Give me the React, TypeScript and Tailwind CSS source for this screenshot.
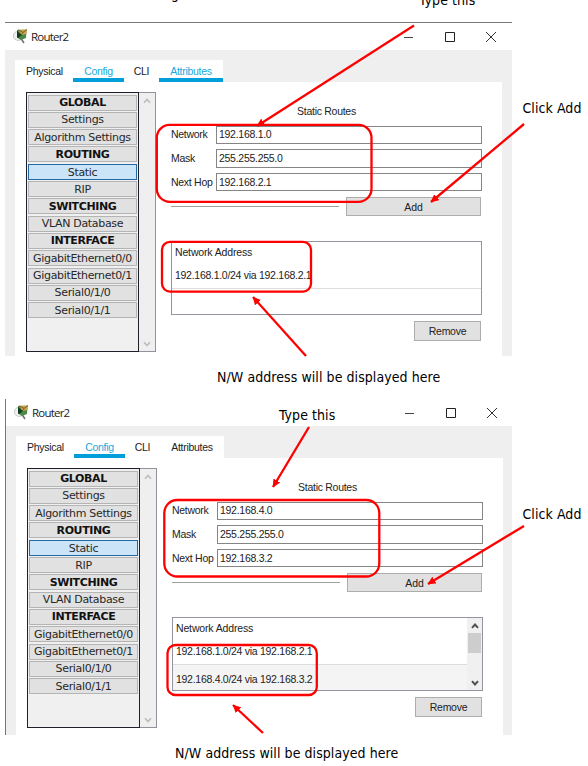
import React from 'react';

const items = ['GLOBAL', 'Settings', 'Algorithm Settings', 'ROUTING', 'Static', 'RIP', 'SWITCHING', 'VLAN Database', 'INTERFACE', 'GigabitEthernet0/0', 'GigabitEthernet0/1', 'Serial0/1/0', 'Serial0/1/1'];

const arial = "font-['Liberation_Sans',sans-serif]";
const note = "font-['DejaVu_Sans_Condensed','Noto_Sans',sans-serif] text-[14px] tracking-[0.07px] leading-[16px] whitespace-nowrap text-black";

function Chevron({ up, dark }: { up?: boolean; dark?: boolean }) {
  return (
    <svg width="8" height="6" viewBox="0 0 8 6" fill="none" stroke={dark ? '#505050' : '#bcbcbc'} strokeWidth={dark ? 2 : 1.6}>
      <path d={up ? 'M1 4.8 4 1.5 7 4.8' : 'M1 1.2 4 4.5 7 1.2'} />
    </svg>
  );
}

function RouterIcon() {
  return (
    <svg width="16" height="16" viewBox="0 0 16 16">
      <ellipse cx="6.2" cy="6.8" rx="4.8" ry="4.6" fill="#f0f1ee" stroke="#c6cac3" />
      <path d="M9 9.5 12 14" stroke="#707070" strokeWidth="1.5" />
      <path d="M5 1 14.5 .8 14 9 9 11 5 8.5Z" fill="#4b8748" />
      <path d="M6.5 .8 15 .5 14.5 5 9 6Z" fill="#c8a24e" />
      <path d="M6.5 .8 11 3.4 15 .5M9 6 11 3.4" stroke="#6b5218" fill="none" strokeWidth=".8" />
      <path d="M5 2 9.8 6 6.4 9 5 8.5Z" fill="#123f1e" />
    </svg>
  );
}

function Sidebar() {
  return (
    <aside className="flex h-[260px] w-[130px] shrink-0 border border-[#92929c] bg-[#efefef]">
      <div className="-ml-px -mt-px flex h-[260px] w-[113px] flex-col gap-[1.3px] border border-[#20202a] bg-[#f0f0f0] px-[1px] pt-[1.6px] font-['DejaVu_Sans',sans-serif] text-[11px]">
        {items.map((t) => {
          const head = /^[A-Z]{4,}$/.test(t);
          return (
            <div key={t} className={`flex h-4 shrink-0 items-center justify-center whitespace-nowrap border leading-none ${t === 'Static' ? 'border-[#2468a8] bg-[#cce4f7] pt-[2px]' : 'border-[#b4b4b4] bg-[#e1e1e1]'} ${head ? 'font-bold text-[#111] tracking-[-0.4px]' : 'text-[#282828] tracking-[-0.33px]'}`}>
              {t}
            </div>
          );
        })}
      </div>
      <div className="flex flex-1 flex-col items-center justify-between pb-1 pt-[5px]"><Chevron up /><Chevron /></div>
    </aside>
  );
}

function Field({ label, value }: { label: string; value: string }) {
  return (
    <div className="flex h-[18.5px] items-center">
      <span className="w-[45px] shrink-0 whitespace-nowrap pt-px">{label}</span>
      <div className="flex h-[18.5px] flex-1 items-center border border-[#858585] bg-white pl-[2px] pt-px">{value}</div>
    </div>
  );
}

function RouterWindow({ second }: { second?: boolean }) {
  const v = second ? ['192.168.4.0', '255.255.255.0', '192.168.3.2'] : ['192.168.1.0', '255.255.255.0', '192.168.2.1'];
  return (
    <section className={`ml-[5px] flex w-[507px] shrink-0 flex-col ${second ? 'h-[336px] border-l border-[#777]' : 'h-[334px] border-t border-[#777]'} ${arial} text-[10.5px] tracking-[-0.28px] text-[#222]`}>
      <header className="flex h-[27px] shrink-0 items-center bg-white pl-[7px]">
        <RouterIcon />
        <span className="ml-[3px] w-[39px] font-['Open_Sans',sans-serif] text-[11.5px] leading-none tracking-[-0.8px]">Router2</span>
        <div className={`ml-auto flex items-center gap-[31px] ${second ? 'pr-[15px]' : 'pr-4'}`}>
          <svg width="10" height="10"><path d="M0 5.5H9" stroke="#444" /></svg>
          <svg width="10" height="10"><path d="M.5 .5H9.5V9.5H.5Z" fill="none" stroke="#222" /></svg>
          <svg width="10" height="10"><path d="M0 0 10 10M10 0 0 10" stroke="#333" /></svg>
        </div>
      </header>
      <div className={`flex min-h-0 flex-1 flex-col bg-[#efefef] pl-[10px] pt-[10px] ${second ? 'pr-[9px]' : 'pr-[10px]'}`}>
        <nav className="flex h-[22px] w-[208px] shrink-0 bg-white">
          <div className="flex w-[58px] items-center pl-[11px] pt-px">Physical</div>
          <div className="flex w-[51px] items-center justify-center border-b-4 border-[#009fda] pt-[5px] text-[#20a8dc]">Config</div>
          <div className="flex w-[35px] items-center justify-center pt-px">CLI</div>
          <div className={`flex flex-1 items-center justify-center ${second ? 'pt-px' : 'border-b-4 border-[#009fda] pt-[5px] text-[#20a8dc]'}`}>Attributes</div>
        </nav>
        <main className="flex flex-1 bg-white pl-[11px] pr-5 pt-[10px]">
          <Sidebar />
          <div className="ml-[15px] flex flex-1 flex-col">
            <h2 className="mt-[13px] h-[12px] text-center leading-[12px]">Static Routes</h2>
            <div className="mt-[8.5px] flex flex-col gap-[5.2px]">
              <Field label="Network" value={v[0]} />
              <Field label="Mask" value={v[1]} />
              <Field label="Next Hop" value={v[2]} />
            </div>
            <div className="mt-[6px] flex h-[19px] items-center gap-[7px] pr-px">
              <div className="h-px flex-1 bg-[#a0a0a0]" />
              <div className="flex h-[19px] w-[135px] items-center justify-center border border-[#adadad] bg-[#e1e1e1] pt-px tracking-normal">Add</div>
            </div>
            <div className="mt-[25px] flex h-[74px] border border-[#92959f]">
              <div className="flex min-w-0 flex-1 flex-col">
                <div className="flex h-[21px] items-center pl-[3px] tracking-[-0.15px]">Network Address</div>
                <div className="flex h-[26px] items-center border-b border-[#ddd] pl-[3px]">192.168.1.0/24 via 192.168.2.1</div>
                {second && <div className="flex flex-1 items-center bg-[#f4f4f4] pl-[3px] pt-[3px]">192.168.4.0/24 via 192.168.3.2</div>}
              </div>
              {second && (
                <div className="flex w-[15px] flex-col items-center bg-[#f0f0f0] pb-1 pt-[5px]">
                  <Chevron up dark />
                  <div className="mt-[4px] h-5 w-[13px] bg-[#cdcdcd]" />
                  <div className="mt-auto"><Chevron dark /></div>
                </div>
              )}
            </div>
            <div className="mr-px mt-[6px] flex h-5 w-[67px] items-center justify-center self-end border border-[#adadad] bg-[#e1e1e1]">Remove</div>
          </div>
        </main>
      </div>
    </section>
  );
}

export default function App() {
  return (
    <div className="relative flex h-[766px] w-[588px] flex-col overflow-hidden bg-white pt-[22px]">
      <RouterWindow />
      <p className={`ml-[217px] mt-[13px] h-[30px] shrink-0 ${note}`}>N/W address will be displayed here</p>
      <RouterWindow second />
      <p className={`ml-[175px] mt-[10px] shrink-0 ${note}`}>N/W address will be displayed here</p>
      <span className={`absolute left-[171px] top-[-14px] ${note}`}>g</span>
      <span className={`absolute left-[419px] top-[-8px] ${note}`}>Type this</span>
      <span className={`absolute left-[279px] top-[407px] ${note}`}>Type this</span>
      <span className={`absolute left-[522.5px] top-[100px] ${note}`}>Click Add</span>
      <span className={`absolute left-[522.5px] top-[506px] ${note}`}>Click Add</span>
      <svg className="absolute left-0 top-0" width="588" height="766" fill="none" stroke="#ff0000" strokeWidth="2.3">
        <defs>
          <marker id="tip" viewBox="0 0 8 8" refX="7.5" refY="4" markerWidth="8" markerHeight="8" markerUnits="userSpaceOnUse" orient="auto">
            <path d="M0 0 8 4 0 8Z" fill="#ff0000" stroke="none" />
          </marker>
        </defs>
        <rect x="156.8" y="124.8" width="214.7" height="77" rx="13" />
        <rect x="162" y="241.8" width="149" height="49.8" rx="8" />
        <rect x="164.3" y="500" width="215" height="76.5" rx="13" />
        <rect x="167.5" y="645" width="149.3" height="50" rx="8" />
        <path d="M414 25.5 257 126" markerEnd="url(#tip)" />
        <path d="M524 124 431 202" markerEnd="url(#tip)" />
        <path d="M306 356 253 297" markerEnd="url(#tip)" />
        <path d="M309 427 273 487" markerEnd="url(#tip)" />
        <path d="M524 526 428 584" markerEnd="url(#tip)" />
        <path d="M263 733 233 705" markerEnd="url(#tip)" />
      </svg>
    </div>
  );
}
